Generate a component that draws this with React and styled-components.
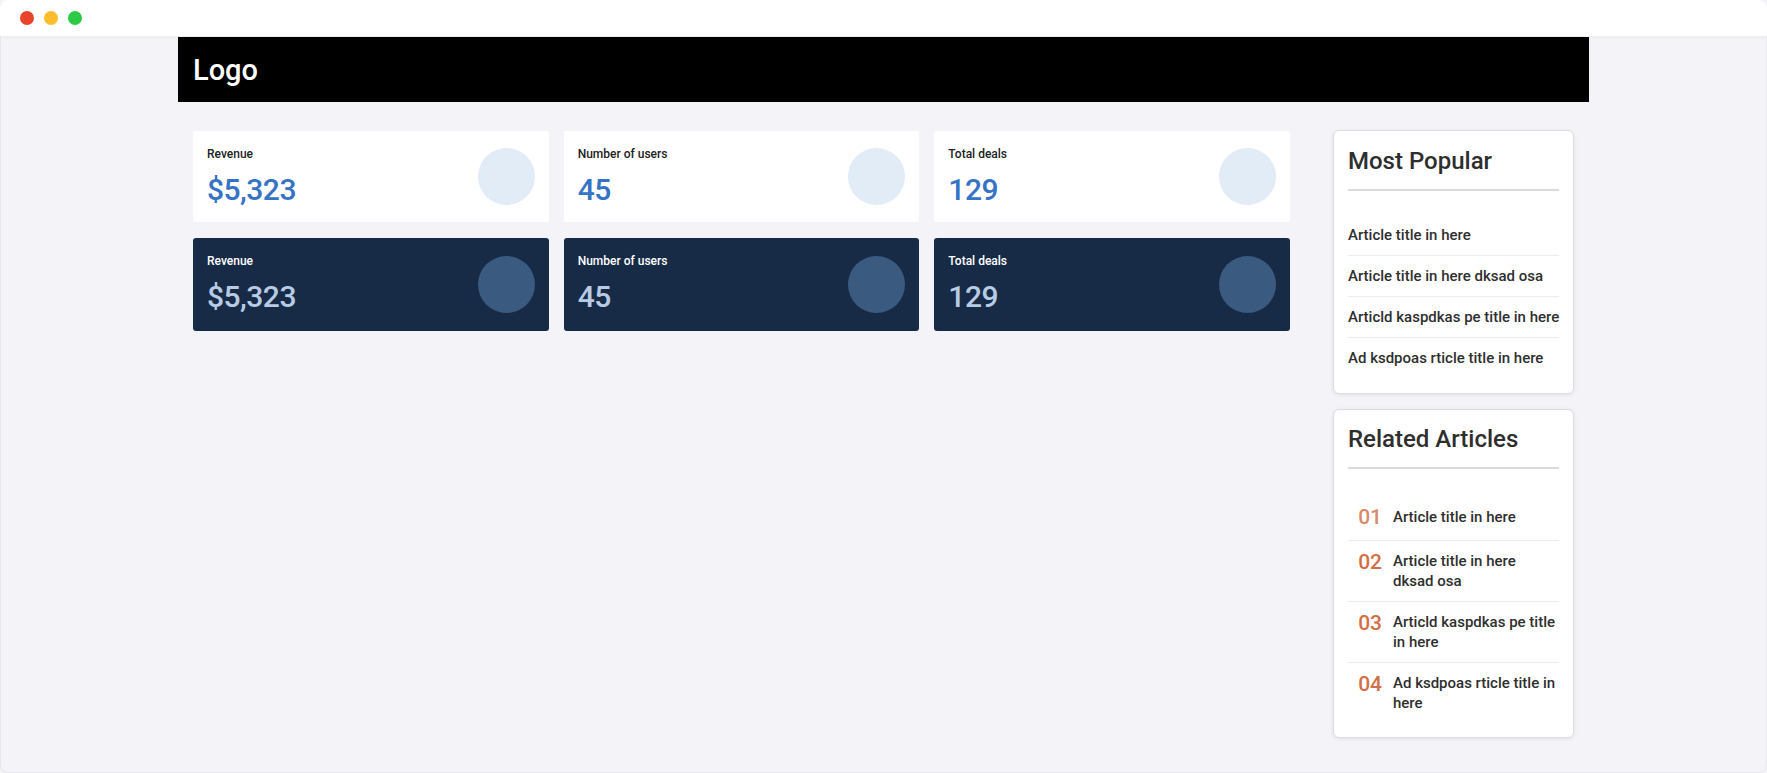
import styled, { createGlobalStyle } from 'styled-components';

const GlobalStyle = createGlobalStyle`
  * { box-sizing: border-box; }
  html, body { margin: 0; padding: 0; background: #f3f3f8; }
  body { font-family: Roboto, "Open Sans", Arial, sans-serif; color: #333; }
`;

const Window = styled.div`
  height: 773px;
  display: flex;
  flex-direction: column;
  background: #f3f3f8;
  box-shadow: inset 0 0 0 1px #e6e6ec;
  border-radius: 8px;
  overflow: hidden;
`;

const TitleBar = styled.div`
  height: 36px;
  flex-shrink: 0;
  background: #fff;
  display: flex;
  align-items: center;
  gap: 10px;
  padding-left: 20px;
  box-shadow: 0 1px 6px rgba(0, 0, 0, 0.04);
`;

const Dot = styled.span`
  width: 14px;
  height: 14px;
  border-radius: 50%;
  background: ${p => p.color};
`;

const Page = styled.div`
  width: 1411px;
  margin: 0 auto;
`;

const Header = styled.header`
  height: 65px;
  margin-top: 1px;
  background: #000;
  display: flex;
  align-items: center;
  padding-left: 15px;
`;

const Logo = styled.h1`
  margin: 0;
  color: #fff;
  font-size: 29px;
  font-weight: 500;
`;

const Content = styled.div`
  display: grid;
  grid-template-columns: 1fr 241px;
  column-gap: 43px;
  padding: 28px 15px 0;
  align-items: start;
`;

const Stats = styled.div`
  display: grid;
  grid-template-columns: repeat(3, 1fr);
  gap: 15px;
  padding-top: 1px;
`;

const StatCard = styled.div`
  display: flex;
  align-items: center;
  justify-content: space-between;
  height: ${p => (p.dark ? 93 : 91)}px;
  margin-top: ${p => (p.dark ? 1 : 0)}px;
  padding: 0 14px;
  border-radius: ${p => (p.dark ? 3 : 2)}px;
  background: ${p => (p.dark ? '#172b47' : '#fff')};
`;

const StatText = styled.div`
  display: flex;
  flex-direction: column;
  gap: 12px;
  margin-top: ${p => (p.dark ? -1 : 0)}px;
`;

const StatLabel = styled.span`
  font-size: 12px;
  font-weight: 500;
  color: ${p => (p.dark ? '#fff' : '#222')};
`;

const StatValue = styled.span`
  font-size: 30px;
  font-weight: 500;
  line-height: 34px;
  letter-spacing: -0.5px;
  color: ${p => (p.dark ? '#b8cbe4' : '#3573c6')};
`;

const Circle = styled.div`
  width: 57px;
  height: 57px;
  border-radius: 50%;
  background: ${p => (p.dark ? '#3a5a80' : '#e2ecf7')};
`;

const Sidebar = styled.aside`
  display: flex;
  flex-direction: column;
  gap: 15px;
`;

const Box = styled.section`
  background: #fff;
  border: 1px solid #dcdce2;
  border-radius: 6px;
  box-shadow: 0 1px 4px rgba(0, 0, 0, 0.08);
  padding: ${p => (p.numbered ? '13px 14px 14px' : '14px 14px 15px')};
`;

const BoxTitle = styled.h2`
  margin: 0;
  font-size: 24px;
  font-weight: 500;
  line-height: 32px;
  color: #2e2e2e;
  padding-bottom: 12px;
  border-bottom: 2px solid #dadade;
`;

const List = styled.ul`
  list-style: none;
  margin: ${p => (p.numbered ? 25 : 24)}px 0 0;
  padding: 0;
`;

const Item = styled.li`
  display: flex;
  align-items: ${p => (p.numbered ? 'flex-start' : 'center')};
  gap: 11px;
  padding: 10px 0;
  font-size: 15px;
  font-weight: 500;
  line-height: 20px;
  color: #2f2f2f;
  white-space: ${p => (p.numbered ? 'normal' : 'nowrap')};
  & + & { border-top: 1px solid #ececef; }
`;

const Num = styled.span`
  flex: 0 0 34px;
  text-align: right;
  font-size: 21px;
  font-weight: 500;
  line-height: 20px;
  color: ${p => (p.first ? '#d9896b' : '#d36f48')};
  margin-top: ${p => (p.single ? 3 : 1)}px;
`;

const ItemText = styled.span`
  flex: 0 0 163px;
  padding: ${p => (p.single ? '3px 0' : '0')};
`;

const stats = [
  { label: 'Revenue', value: '$5,323' },
  { label: 'Number of users', value: '45' },
  { label: 'Total deals', value: '129' },
];

const popular = [
  'Article title in here',
  'Article title in here dksad osa',
  'Articld kaspdkas pe title in here',
  'Ad ksdpoas rticle title in here',
];

export default function App() {
  return (
    <>
      <GlobalStyle />
      <Window>
        <TitleBar>
          <Dot color="#e8452c" />
          <Dot color="#fbbd2e" />
          <Dot color="#2bcb48" />
        </TitleBar>
        <Page>
          <Header>
            <Logo>Logo</Logo>
          </Header>
          <Content>
            <Stats>
              {[false, true].map(dark =>
                stats.map(s => (
                  <StatCard dark={dark} key={s.label + dark}>
                    <StatText dark={dark}>
                      <StatLabel dark={dark}>{s.label}</StatLabel>
                      <StatValue dark={dark}>{s.value}</StatValue>
                    </StatText>
                    <Circle dark={dark} />
                  </StatCard>
                ))
              )}
            </Stats>
            <Sidebar>
              <Box>
                <BoxTitle>Most Popular</BoxTitle>
                <List>
                  {popular.map(t => (
                    <Item key={t}>{t}</Item>
                  ))}
                </List>
              </Box>
              <Box numbered>
                <BoxTitle>Related Articles</BoxTitle>
                <List numbered>
                  {popular.map((t, i) => (
                    <Item numbered key={t}>
                      <Num first={i === 0} single={i === 0}>0{i + 1}</Num>
                      <ItemText single={i === 0}>{t}</ItemText>
                    </Item>
                  ))}
                </List>
              </Box>
            </Sidebar>
          </Content>
        </Page>
      </Window>
    </>
  );
}
